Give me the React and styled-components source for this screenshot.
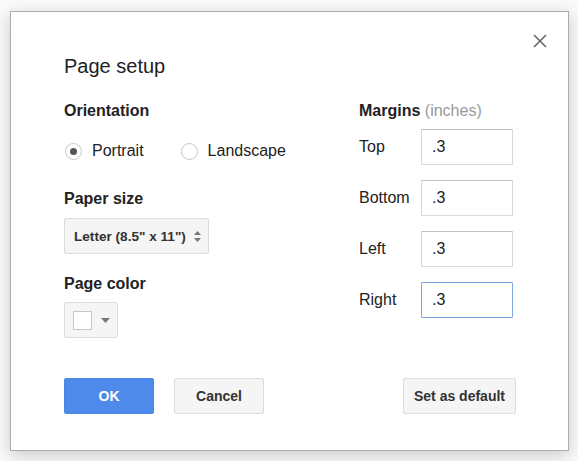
import React from "react";
import styled, { createGlobalStyle } from "styled-components";

const GlobalStyle = createGlobalStyle`
  html, body {
    margin: 0;
    padding: 0;
    background: #fafafa;
    font-family: "Liberation Sans", Arial, sans-serif;
    color: #222;
  }
`;

const Page = styled.div`
  padding: 11px 9px 10px 10px;
  box-sizing: border-box;
  width: 578px;
  height: 461px;
`;

const Dialog = styled.div`
  position: relative;
  box-sizing: border-box;
  width: 559px;
  height: 440px;
  background: #fff;
  border: 1px solid #acacac;
  box-shadow: 0 4px 16px rgba(0, 0, 0, 0.2);
  padding: 40px 53px 0 53px;
`;

const Close = styled.button`
  position: absolute;
  top: 18px;
  right: 17px;
  width: 22px;
  height: 22px;
  padding: 0;
  border: 0;
  background: transparent;
  display: flex;
  align-items: center;
  justify-content: center;
  cursor: pointer;
`;

const Title = styled.h1`
  margin: 0;
  font-size: 20px;
  font-weight: normal;
  line-height: 28px;
  color: #222;
`;

const Body = styled.div`
  display: grid;
  grid-template-columns: 295px 1fr;
  margin-top: 22px;
`;

const Column = styled.div`
  display: flex;
  flex-direction: column;
`;

const Heading = styled.div`
  font-size: 16px;
  font-weight: bold;
  line-height: 18px;
  color: #222;
  margin-top: ${p => p.$top || 0}px;
`;

const Muted = styled.span`
  font-weight: normal;
  color: #999;
`;

const RadioRow = styled.div`
  display: flex;
  gap: 36px;
  margin-top: 21px;
`;

const RadioLabel = styled.label`
  display: flex;
  align-items: center;
  gap: 10px;
  font-size: 16px;
  line-height: 20px;
  color: #222;
  margin-left: 1px;
`;

const RadioCircle = styled.span`
  width: 17px;
  height: 17px;
  border-radius: 50%;
  border: 1px solid #c6c6c6;
  box-sizing: border-box;
  display: flex;
  align-items: center;
  justify-content: center;
  background: #fff;
  &::after {
    content: "";
    width: 7px;
    height: 7px;
    border-radius: 50%;
    background: ${p => (p.$checked ? "#555" : "transparent")};
  }
`;

const SelectBox = styled.div`
  margin-top: 10px;
  width: 145px;
  height: 36px;
  box-sizing: border-box;
  display: flex;
  align-items: center;
  justify-content: space-between;
  padding: 0 6px 0 9px;
  background: #f5f5f5;
  border: 1px solid #dcdcdc;
  border-radius: 2px;
  font-size: 13.6px;
  font-weight: bold;
  color: #333;
`;

const ColorButton = styled.div`
  margin-top: 9px;
  width: 54px;
  height: 36px;
  box-sizing: border-box;
  display: flex;
  align-items: center;
  gap: 9px;
  padding-left: 8px;
  background: #f5f5f5;
  border: 1px solid #dcdcdc;
  border-radius: 2px;
`;

const Swatch = styled.span`
  width: 19px;
  height: 19px;
  box-sizing: border-box;
  background: #fff;
  border: 1px solid #c6c6c6;
`;

const MarginGrid = styled.div`
  margin-top: 9px;
  display: grid;
  grid-template-columns: 62px 92px;
  row-gap: 15px;
  align-items: center;
`;

const MarginLabel = styled.label`
  font-size: 16px;
  color: #222;
`;

const MarginInput = styled.input`
  width: 92px;
  height: 36px;
  box-sizing: border-box;
  border: 1px solid ${p => (p.$focus ? "#7ea5e4" : "#d9d9d9")};
  border-top-color: ${p => (p.$focus ? "#7ea5e4" : "#c0c0c0")};
  border-radius: 1px;
  padding: 0 10px;
  font-family: "Liberation Sans", Arial, sans-serif;
  font-size: 16px;
  color: #222;
  outline: none;
  background: #fff;
`;

const Footer = styled.div`
  display: flex;
  align-items: center;
  margin-top: 40px;
  gap: 20px;
`;

const Button = styled.button`
  height: 36px;
  min-width: ${p => p.$w || 90}px;
  box-sizing: border-box;
  padding: 0 10px;
  border-radius: 2px;
  font-family: "Liberation Sans", Arial, sans-serif;
  font-size: 14px;
  font-weight: bold;
  cursor: pointer;
  background: ${p => (p.$primary ? "#4d8ae9" : "#f5f5f5")};
  color: ${p => (p.$primary ? "#fff" : "#333")};
  border: 1px solid ${p => (p.$primary ? "#4a86e3" : "#dcdcdc")};
  margin-left: ${p => (p.$push ? "auto" : "0")};
  margin-right: ${p => (p.$push ? "-1px" : "0")};
`;

export default function App() {
  return (
    <Page>
      <GlobalStyle />
      <Dialog>
        <Close aria-label="Close">
          <svg width="14" height="14" viewBox="0 0 14 14">
            <path d="M1 1 L13 13 M13 1 L1 13" stroke="#666" strokeWidth="1.6" fill="none" />
          </svg>
        </Close>
        <Title>Page setup</Title>
        <Body>
          <Column>
            <Heading>Orientation</Heading>
            <RadioRow>
              <RadioLabel>
                <RadioCircle $checked />
                Portrait
              </RadioLabel>
              <RadioLabel>
                <RadioCircle />
                Landscape
              </RadioLabel>
            </RadioRow>
            <Heading $top={29}>Paper size</Heading>
            <SelectBox>
              <span>Letter (8.5" x 11")</span>
              <svg width="9" height="13" viewBox="0 0 9 13">
                <path d="M4.5 1 L8 5 L1 5 Z M4.5 12 L8 8 L1 8 Z" fill="#777" />
              </svg>
            </SelectBox>
            <Heading $top={21}>Page color</Heading>
            <ColorButton>
              <Swatch />
              <svg width="9" height="5" viewBox="0 0 9 5">
                <path d="M0 0 L9 0 L4.5 5 Z" fill="#777" />
              </svg>
            </ColorButton>
          </Column>
          <Column>
            <Heading>
              Margins <Muted>(inches)</Muted>
            </Heading>
            <MarginGrid>
              <MarginLabel>Top</MarginLabel>
              <MarginInput defaultValue=".3" />
              <MarginLabel>Bottom</MarginLabel>
              <MarginInput defaultValue=".3" />
              <MarginLabel>Left</MarginLabel>
              <MarginInput defaultValue=".3" />
              <MarginLabel>Right</MarginLabel>
              <MarginInput defaultValue=".3" $focus />
            </MarginGrid>
          </Column>
        </Body>
        <Footer>
          <Button $primary>OK</Button>
          <Button>Cancel</Button>
          <Button $push $w={112}>Set as default</Button>
        </Footer>
      </Dialog>
    </Page>
  );
}
